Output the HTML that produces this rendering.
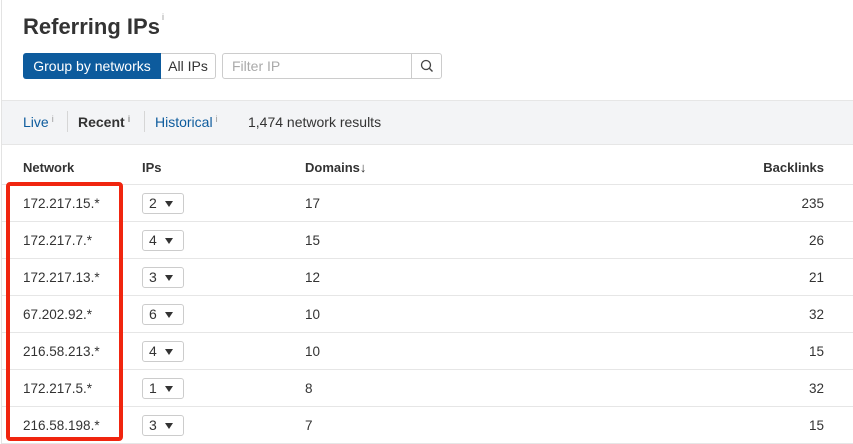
<!DOCTYPE html>
<html><head><style>
*{box-sizing:border-box;margin:0;padding:0}
body{width:853px;height:444px;overflow:hidden;background:#fff;font-family:"Liberation Sans",Arial,sans-serif;color:#333;position:relative}
.vl{position:absolute;left:1px;top:0;width:1px;height:444px;background:#e3e3e3}
h1{position:absolute;left:23px;top:14px;font-size:22px;font-weight:bold;color:#333}
h1 sup{font-size:9px;font-weight:normal;color:#999;vertical-align:top;position:relative;top:-2px;margin-left:2px}
.btn{position:absolute;top:53px;height:26px;font-size:14px;line-height:24px}
.b1{left:23px;width:138px;background:#0d5b9d;color:#fff;border-radius:3px 0 0 3px;text-align:center;line-height:26px}
.b2{left:161px;width:55px;border:1px solid #ccc;border-left:none;border-radius:0 3px 3px 0;text-align:center;color:#333}
.in{left:222px;width:220px;border:1px solid #ccc;border-radius:3px;color:#aaa;padding-left:9px}
.in .s{position:absolute;right:0;top:0;width:30px;height:24px;border-left:1px solid #ccc}
.band{position:absolute;left:2px;top:100px;width:851px;height:45px;background:#f3f4f6;border-top:1px solid #e6e6e6;border-bottom:1px solid #e6e6e6;font-size:14px}
.band span{position:absolute;top:13px}
.band i{font-style:normal;font-size:9px;color:#999;vertical-align:top;margin-left:3px}
.sep{position:absolute;top:10px;width:1px;height:21px;background:#d6d6d6}
.a{color:#0d5b9d}
.row{position:absolute;left:2px;width:851px;height:37px;border-bottom:1px solid #e6e6e6;font-size:13.5px}
.row div{position:absolute;top:11px}
.hd{font-weight:bold;font-size:13px}
.dd{top:8px!important;left:140px;width:42px;height:21px;border:1px solid #ccc;border-radius:3px;padding-left:6px;line-height:19px;font-size:14px}
.dd:after{content:"";position:absolute;left:22px;top:7px;border-left:4.5px solid transparent;border-right:4.5px solid transparent;border-top:6px solid #333}
.red{position:absolute;left:6px;top:182px;width:117px;height:259px;border:4px solid #f0250f;border-radius:4px}
</style></head><body>
<div class="vl"></div>
<h1>Referring IPs<sup>i</sup></h1>
<div class="btn b1">Group by networks</div>
<div class="btn b2">All IPs</div>
<div class="btn in">Filter IP<div class="s"><svg width="30" height="24"><circle cx="14" cy="11" r="4.5" fill="none" stroke="#444" stroke-width="1.3"/><line x1="17.3" y1="14.3" x2="20.5" y2="17.5" stroke="#444" stroke-width="1.4"/></svg></div></div>
<div class="band">
<span class="a" style="left:21px">Live<i>i</i></span>
<div class="sep" style="left:65px"></div>
<span style="left:76px;font-weight:bold">Recent<i>i</i></span>
<div class="sep" style="left:142px"></div>
<span class="a" style="left:153px">Historical<i>i</i></span>
<span style="left:246px">1,474 network results</span>
</div>
<div class="row hd" style="top:148px;height:37px"><div style="left:21px;top:12px">Network</div><div style="left:140px;top:12px">IPs</div><div style="left:303px;top:12px">Domains&#8595;</div><div style="right:29px;top:12px">Backlinks</div></div>
<div class="row" style="top:185px"><div style="left:21px">172.217.15.*</div><div class="dd">2</div><div style="left:303px">17</div><div style="right:29px">235</div></div>
<div class="row" style="top:222px"><div style="left:21px">172.217.7.*</div><div class="dd">4</div><div style="left:303px">15</div><div style="right:29px">26</div></div>
<div class="row" style="top:259px"><div style="left:21px">172.217.13.*</div><div class="dd">3</div><div style="left:303px">12</div><div style="right:29px">21</div></div>
<div class="row" style="top:296px"><div style="left:21px">67.202.92.*</div><div class="dd">6</div><div style="left:303px">10</div><div style="right:29px">32</div></div>
<div class="row" style="top:333px"><div style="left:21px">216.58.213.*</div><div class="dd">4</div><div style="left:303px">10</div><div style="right:29px">15</div></div>
<div class="row" style="top:370px"><div style="left:21px">172.217.5.*</div><div class="dd">1</div><div style="left:303px">8</div><div style="right:29px">32</div></div>
<div class="row" style="top:407px"><div style="left:21px">216.58.198.*</div><div class="dd">3</div><div style="left:303px">7</div><div style="right:29px">15</div></div>
<div class="red"></div>
</body></html>
